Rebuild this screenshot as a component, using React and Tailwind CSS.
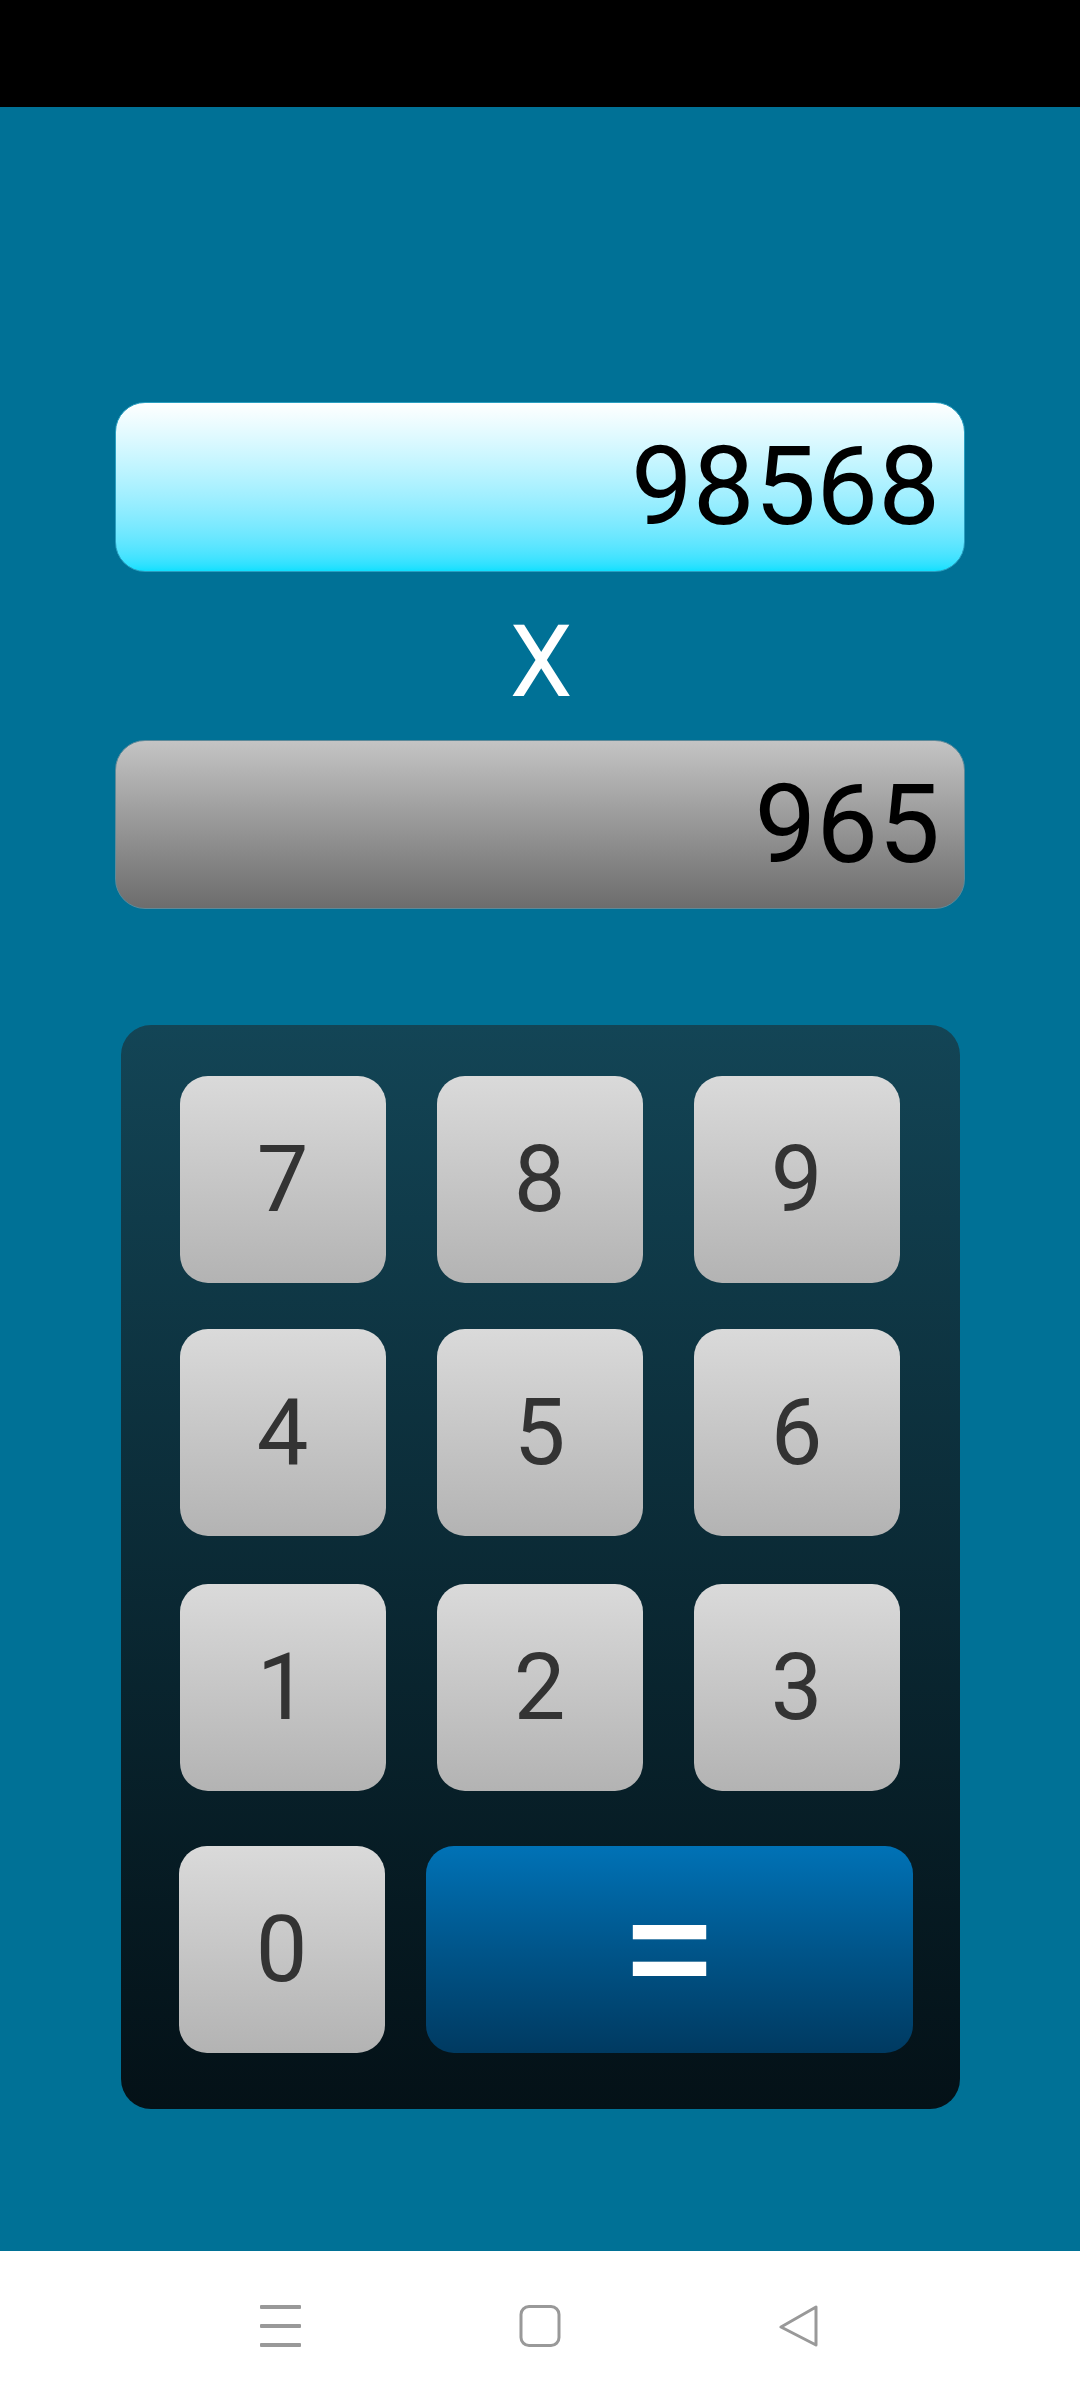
import React from 'react'

const rows = [['7', '8', '9'], ['4', '5', '6'], ['1', '2', '3']]

function Key({ label }) {
  return (
    <button className="w-[206px] h-[207px] rounded-[28px] bg-gradient-to-b from-[#dadada] to-[#b3b3b3] text-[#333333] text-[92px] leading-none flex items-center justify-center">
      {label}
    </button>
  )
}

export default function App() {
  const font = { fontFamily: 'Roboto, "Liberation Sans", sans-serif' }
  return (
    <div className="w-[1080px] h-[2400px] flex flex-col bg-[#007196]" style={font}>
      <div className="h-[107px] bg-black" />

      <div className="flex-1 flex flex-col items-center">
        <div className="mt-[295px] w-[850px] h-[170px] rounded-[30px] border border-[#2a9fc0] bg-gradient-to-b from-white to-[#0ce0ff] flex items-center justify-end pr-[24px]">
          <span className="text-[110px] leading-none text-black">98568</span>
        </div>

        <div className="h-[168px] flex items-center justify-center text-white text-[100px] leading-none pl-[2px] pt-[12px]">X</div>

        <div className="w-[850px] h-[169px] rounded-[30px] border border-[#5d8a9a] bg-gradient-to-b from-[#c4c4c4] to-[#6d6d6d] flex items-center justify-end pr-[24px]">
          <span className="text-[110px] leading-none text-black">965</span>
        </div>

        <div className="mt-[116px] w-[839px] h-[1084px] rounded-[30px] bg-gradient-to-b from-[#134556] to-[#041117] pt-[51px] pl-[59px]">
          <div className="flex flex-col gap-[46px]">
            {rows.map((r, i) => (
              <div key={i} className={`flex gap-[51px] ${i === 2 ? 'mt-[2px]' : ''}`}>
                {r.map(k => <Key key={k} label={k} />)}
              </div>
            ))}
          </div>
          <div className="flex gap-[41px] mt-[55px] -ml-[1px]">
            <Key label="0" />
            <button className="w-[487px] h-[207px] rounded-[28px] bg-gradient-to-b from-[#0072b6] to-[#003a61] text-white text-[180px] leading-none flex items-center justify-center">
              =
            </button>
          </div>
        </div>
      </div>

      <div className="h-[149px] bg-white flex items-center justify-center gap-[217px]">
        <svg width="42" height="42" viewBox="0 0 42 42">
          <g fill="#999999">
            <rect x="0" y="0" width="41" height="4" rx="1" />
            <rect x="0" y="19" width="41" height="4" rx="1" />
            <rect x="0" y="38" width="41" height="4" rx="1" />
          </g>
        </svg>
        <svg width="42" height="42" viewBox="0 0 42 42">
          <rect x="2" y="1.5" width="38" height="39" rx="8" fill="none" stroke="#999999" strokeWidth="3" />
        </svg>
        <svg width="42" height="42" viewBox="0 0 42 42">
          <path d="M38 2 L38 40 L3 22 Z" fill="none" stroke="#999999" strokeWidth="3" strokeLinejoin="round" />
        </svg>
      </div>
    </div>
  )
}
